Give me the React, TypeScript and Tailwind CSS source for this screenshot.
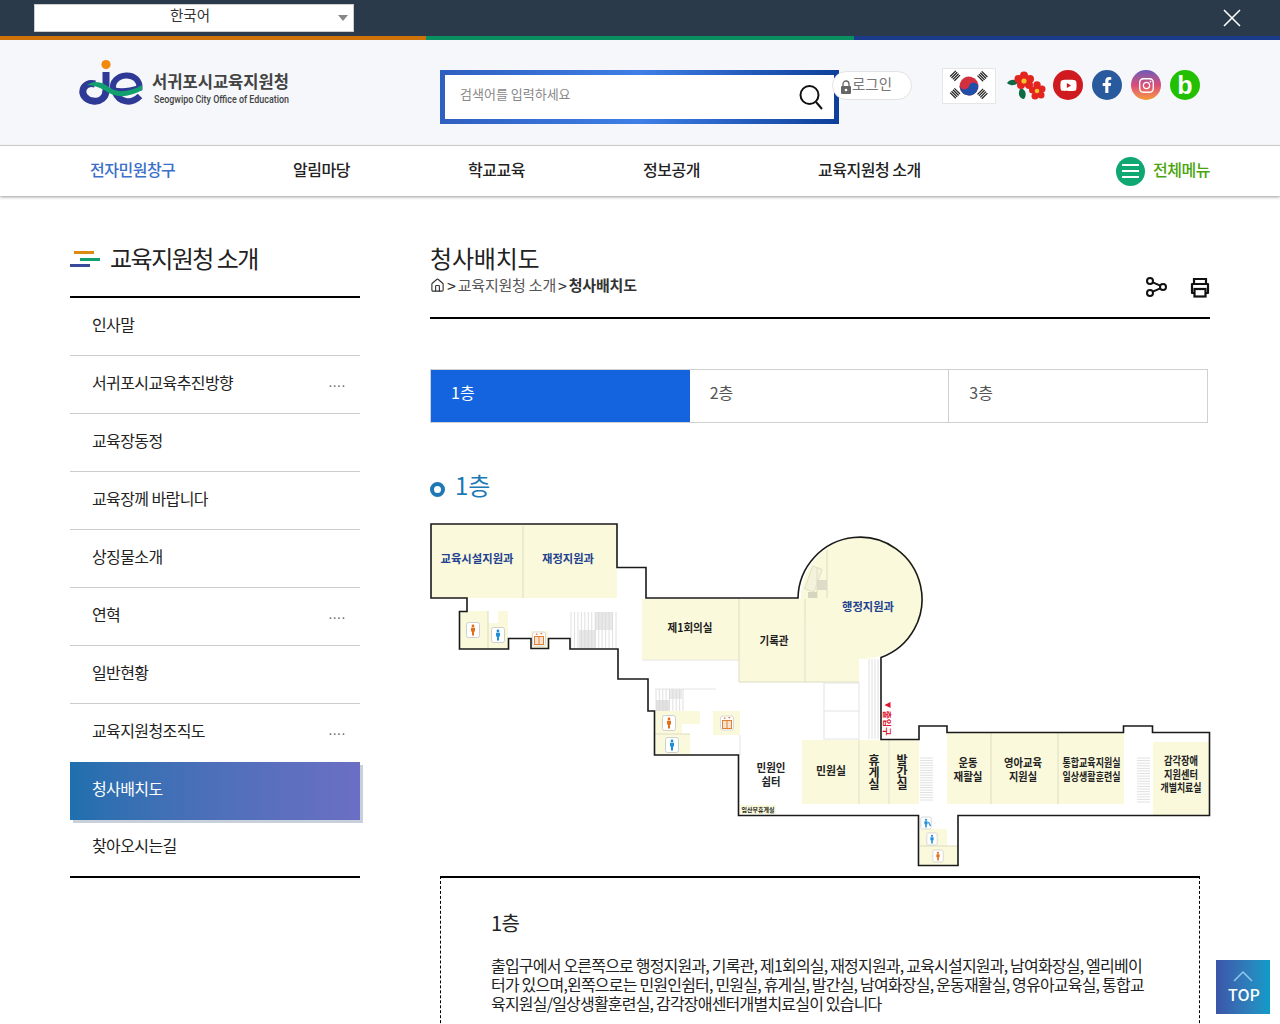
import { Home } from "lucide-react";
import { FaFacebookF, FaInstagram, FaYoutube } from "react-icons/fa";

const navItems = [
  { label: "전자민원창구", className: "w-[203px] pb-[5px] text-[#3b6fc9]" },
  { label: "알림마당", className: "w-[175px] pb-[5px]" },
  { label: "학교교육", className: "w-[175px] pb-[5px]" },
  { label: "정보공개", className: "w-[175px] pb-[5px]" },
  { label: "교육지원청 소개", className: "w-[175px] pb-[5px]" },
];

const sideItems = [
  { label: "인사말" },
  { label: "서귀포시교육추진방향", more: true },
  { label: "교육장동정" },
  { label: "교육장께 바랍니다" },
  { label: "상징물소개" },
  { label: "연혁", more: true },
  { label: "일반현황" },
  { label: "교육지원청조직도", more: true },
  { label: "청사배치도", active: true },
  { label: "찾아오시는길", last: true },
];

const ROOM = "#fbf9dc";
const NAVY = "#21418f";
const INK = "#222222";

// room labels on the floor plan
const Label = ({ x, y, t, size = 11, fill = INK, w }: { x: number; y: number; t: string; size?: number; fill?: string; w?: number }) => (
  <text
    x={x}
    y={y}
    textAnchor="middle"
    dominantBaseline="central"
    fontSize={size}
    fontWeight={700}
    fill={fill}
    textLength={w}
    lengthAdjust={w ? "spacingAndGlyphs" : undefined}
  >
    {t}
  </text>
);

const VLabel = ({ x, y, t }: { x: number; y: number; t: string }) => (
  <text x={x} y={y} writingMode="vertical-rl" textAnchor="middle" fontSize={12} fontWeight={700} fill={INK}>
    {t}
  </text>
);

const Stairs = ({ x, y, w, h, n, vertical = false }: { x: number; y: number; w: number; h: number; n: number; vertical?: boolean }) => (
  <g stroke="#d8d8d8" strokeWidth="0.8">
    {Array.from({ length: n }).map((_, i) =>
      vertical ? (
        <line key={i} x1={x + (i * w) / (n - 1)} y1={y} x2={x + (i * w) / (n - 1)} y2={y + h} />
      ) : (
        <line key={i} x1={x} y1={y + (i * h) / (n - 1)} x2={x + w} y2={y + (i * h) / (n - 1)} />
      ),
    )}
  </g>
);

const Person = ({ x, y, color, s = 1 }: { x: number; y: number; color: string; s?: number }) => (
  <g transform={`translate(${x} ${y}) scale(${s})`}>
    <rect x="-6.5" y="-7.5" width="13" height="15" rx="2" fill="#fff" stroke="#cfcfcf" />
    <circle cx="0" cy="-4" r="1.4" fill={color} />
    <path d="M-2 -2.3H2V1.5H1V5.500H-1V1.500H-2Z" fill={color} />
  </g>
);

const Lift = ({ x, y }: { x: number; y: number }) => (
  <g transform={`translate(${x} ${y})`}>
    <rect x="-6.5" y="-7" width="13" height="14" rx="2" fill="#fff" stroke="#d8d8d8" />
    <rect x="-4.5" y="-2.5" width="9" height="8" fill="#f8e3d0" stroke="#e08033" />
    <line x1="0" y1="-2.5" x2="0" y2="5.5" stroke="#e08033" />
    <path d="M-3.5 -4.2L-2.3 -6L-1 -4.2ZM1 -6L2.3 -4.2L3.5 -6Z" fill="#e08033" />
  </g>
);

const FloorPlan = () => (
  <svg viewBox="430 520 782 350" className="block w-[782px] h-[350px]">
    {/* rooms */}
    <g fill={ROOM}>
      <rect x="431" y="524" width="186" height="74" />
      <rect x="459" y="611" width="29" height="38" />
      <rect x="488" y="623" width="20" height="26" />
      <rect x="498" y="611" width="10" height="12" />
      <rect x="531" y="631" width="17" height="17" />
      <rect x="642" y="599" width="97" height="61" />
      <rect x="739" y="599" width="66" height="83" />
      <circle cx="862" cy="598" r="61" />
      <rect x="806" y="599" width="53" height="83" />
      <rect x="655" y="711" width="45" height="13" />
      <rect x="655" y="724" width="27" height="10" />
      <rect x="655" y="734" width="35" height="20" />
      <rect x="713" y="711" width="27" height="24" />
      <rect x="802" y="740" width="57" height="64" />
      <rect x="860" y="740" width="29" height="64" />
      <rect x="890" y="740" width="29" height="64" />
      <rect x="947" y="732" width="44" height="72" />
      <rect x="991" y="732" width="67" height="72" />
      <rect x="1058" y="732" width="66" height="72" />
      <rect x="1153" y="742" width="56" height="73" />
      <rect x="920" y="829" width="27" height="17" />
      <rect x="920" y="846" width="38" height="19" />
    </g>
    <rect x="859" y="659" width="22" height="24" fill="#fff" />
    {/* inner walls */}
    <g stroke="#dedcc0" strokeWidth="1" fill="none">
      <line x1="523" y1="526" x2="523" y2="598" />
      <line x1="739" y1="599" x2="739" y2="682" />
      <line x1="805" y1="599" x2="805" y2="682" />
      <line x1="739" y1="682" x2="859" y2="682" />
      <line x1="827" y1="550" x2="827" y2="598" />
      <line x1="859" y1="740" x2="859" y2="804" />
      <line x1="889" y1="740" x2="889" y2="804" />
      <line x1="991" y1="733" x2="991" y2="804" />
      <line x1="1058" y1="733" x2="1058" y2="804" />
      <line x1="488" y1="611" x2="488" y2="649" />
      <line x1="920" y1="846" x2="958" y2="846" />
      <line x1="655" y1="734" x2="690" y2="734" />
    </g>
    <g stroke="#e4e4e4" strokeWidth="1" fill="none">
      <rect x="824" y="683" width="35" height="56" />
      <line x1="824" y1="711" x2="859" y2="711" />
      <line x1="655" y1="689" x2="716" y2="689" />
      <line x1="642" y1="660" x2="739" y2="660" />
      <line x1="740" y1="735" x2="740" y2="755" />
    </g>
    {/* stairs */}
    <rect x="579" y="630" width="17" height="18" fill="#e8e8e8" />
    <rect x="595" y="612" width="18" height="18" fill="#e8e8e8" />
    <Stairs x={571} y={612} w={45} h={37} n={14} vertical />
    <rect x="656" y="700" width="13" height="11" fill="#e2e2e2" />
    <rect x="669" y="689" width="13" height="10" fill="#eaeaea" />
    <Stairs x={656} y={689} w={27} h={22} n={9} vertical />
    <Stairs x={869} y={659} w={9} h={80} n={4} vertical />
    <Stairs x={920} y={758} w={13} h={42} n={18} />
    <Stairs x={1137} y={758} w={13} h={44} n={18} />
    <g transform="translate(813 580) rotate(20)" stroke="#dcdbc4" strokeWidth="0.8" fill="#f4f2da">
      <rect x="-5" y="-13" width="10" height="24" />
    </g>
    <line x1="817" y1="568" x2="817" y2="598" stroke="#dedcc0" />
    <rect x="808" y="592" width="9" height="6" fill="#d6d5c0" />
    <rect x="817" y="580" width="10" height="10" fill="#dedcc8" />
    {/* outer wall */}
    <path
      d="M431 524H617V567.5H646V598H798A62 62 0 1 1 881 657.5V739.5H919V726H947V732.5H1123.5V726H1152.5V732.5H1209.5V815.5H958V865.5H918.5V815.5H738.5V755H654.5V711H648V679H618V649H570V638.5H548.5V648.5H531V638.5H508.5V649H459.5V611.5H467V598H431Z"
      fill="none"
      stroke="#1a1a1a"
      strokeWidth="1.6"
    />
    {/* fixtures */}
    <Person x={473} y={630} color="#e0701c" />
    <Person x={498} y={635} color="#1f8fd8" />
    <Lift x={539} y={639} />
    <Person x={669} y={723} color="#e0701c" />
    <Person x={672} y={745} color="#1f8fd8" />
    <Lift x={727} y={723} />
    <Person x={926} y={823} color="#1f8fd8" s={0.8} />
    <path d="M928.500 822L930.500 826" stroke="#1f8fd8" strokeWidth="1.2" />
    <Person x={932} y={839} color="#1f8fd8" s={0.8} />
    <Person x={938} y={856} color="#e0701c" s={0.8} />
    <rect x="740" y="805" width="36" height="9" fill={ROOM} />
    <Label x={758} y={809.5} t="임산부휴게실" size={6} w={33} />
    {/* labels */}
    <Label x={477} y={557.5} t="교육시설지원과" fill={NAVY} w={73} />
    <Label x={568} y={557.5} t="재정지원과" fill={NAVY} w={52} />
    <Label x={690} y={626.5} t="제1회의실" w={45} />
    <Label x={774} y={640} t="기록관" w={29} />
    <Label x={868} y={606} t="행정지원과" fill={NAVY} w={52} />
    <Label x={771} y={767} t="민원인" w={29} />
    <Label x={771} y={781} t="쉼터" w={19} />
    <Label x={831} y={769.5} t="민원실" w={30} />
    <VLabel x={874} y={772} t="휴게실" />
    <VLabel x={902} y={772} t="발간실" />
    <Label x={968} y={762} t="운동" w={19} />
    <Label x={968} y={776} t="재활실" w={29} />
    <Label x={1023} y={762} t="영아교육" w={38} />
    <Label x={1023} y={776} t="지원실" w={28} />
    <Label x={1091.5} y={762} t="통합교육지원실" w={58} />
    <Label x={1091.5} y={776} t="일상생활훈련실" w={58} />
    <Label x={1181} y={760} t="감각장애" w={34} />
    <Label x={1181} y={773.5} t="지원센터" w={34} />
    <Label x={1181} y={787} t="개별치료실" w={41} />
    <path d="M884.500 705L890.500 702V708Z" fill="#e0102c" />
    <g transform="translate(888 723) rotate(90)">
      <Label x={0} y={0} t="출입구" size={8.5} fill="#e0102c" w={25} />
    </g>
  </svg>
);

const Logo = () => (
  <svg viewBox="78 56 216 52" className="w-[216px] h-[52px] overflow-visible">
    <circle cx="106" cy="64.500" r="4.600" fill="#ef8a0c" />
    <path d="M106 72V90C106 98 100 102 93 101C85 100 82 94 83 90C84 85 89 82.5 95 84" fill="none" stroke="#2f3a96" strokeWidth="7" />
    <path d="M113.5 90C111 82 118 76 126 75.5C134.5 75 140 81 139.5 88C130 91 120 92 113.5 90Z" fill="none" stroke="#2f3a96" strokeWidth="6" />
    <path d="M115 92C119 102 131 105 140 96" fill="none" stroke="#2f3a96" strokeWidth="6.500" />
    <path d="M87 85C95 79 104 83 110 88C118 93 130 92 142 85V90C130 97 118 98 109 93C103 89 95 85 87 85Z" fill="#12a06e" />
    <text x="152" y="88" fontSize="17" fontWeight="700" fill="#444" textLength="137" lengthAdjust="spacingAndGlyphs">서귀포시교육지원청</text>
    <text x="154" y="103" fontSize="11" fontWeight="500" fill="#444" textLength="135" lengthAdjust="spacingAndGlyphs" fontFamily="Roboto, sans-serif">Seogwipo City Office of Education</text>
  </svg>
);

const Flag = () => (
  <div className="w-[54px] h-[36px] bg-white border border-[#e6e6e6] flex items-center justify-center">
    <svg viewBox="0 0 54 36" className="w-[52px] h-[34px]">
      <g transform="rotate(15 27 18)">
        <circle cx="27" cy="18" r="10" fill="#d3303f" />
        <path d="M17 18A5 5 0 0 0 27 18A5 5 0 0 1 37 18A10 10 0 0 1 17 18Z" fill="#1f4fa8" />
      </g>
      <g stroke="#222" strokeWidth="1.3">
        <path d="M7 8L13 2M8.500 9.500L14.500 3.500M10 11L16 5M11.500 12.500L17.500 6.500" />
        <path d="M36 6L42 12M37.500 4.500L43.500 10.500M39 3L45 9M40.500 1.500L46.500 7.500" transform="translate(0 1)" />
        <path d="M7 25L13 31M8.500 23.500L14.500 29.500M10 22L16 28M11.500 20.500L17.500 26.500" />
        <path d="M36 27L42 21M37.500 28.500L43.500 22.500M39 30L45 24M40.500 31.500L46.500 25.500" />
      </g>
    </svg>
  </div>
);

const Camellia = () => (
  <svg viewBox="0 0 40 30" className="w-[40px] h-[30px]">
    <path d="M1 12C4 8 9 8 13 11C9 15 4 15 1 12Z" fill="#0f6b45" />
    <path d="M15 17C20 19 21 24 18 28C13 28 11 21 15 17Z" fill="#0f6b45" />
    <g fill="#e4241f">
      <circle cx="18" cy="4.500" r="4" />
      <circle cx="24" cy="8" r="4" />
      <circle cx="23" cy="14" r="4" />
      <circle cx="15" cy="14" r="4" />
      <circle cx="12.500" cy="8" r="4" />
      <circle cx="18" cy="10" r="5" />
      <circle cx="31" cy="14" r="3.700" />
      <circle cx="36" cy="18" r="3.500" />
      <circle cx="35" cy="24" r="3.500" />
      <circle cx="29" cy="25" r="3.500" />
      <circle cx="26.500" cy="19" r="3.500" />
      <circle cx="31" cy="20" r="4.500" />
    </g>
    <circle cx="18" cy="10" r="2.600" fill="#f2c22c" />
    <circle cx="31" cy="20" r="2.300" fill="#f2c22c" />
  </svg>
);

export default function App() {
  return (
    <div className="relative h-[1024px] overflow-hidden bg-white text-[#222] font-['Noto_Sans_CJK_KR',sans-serif]">
      {/* language bar */}
      <div className="h-[36px] bg-[#2b3a4a] flex items-start justify-between pl-[34px] pr-[38px]">
        <div className="relative mt-[4px] w-[320px] h-[28px] pr-[8px] bg-white border border-[#ccc] text-center text-[14.500px] leading-[20px] text-[#333]">
          한국어
          <span className="absolute right-[5px] top-[10px] border-x-[5px] border-t-[6px] border-x-transparent border-t-[#888]" />
        </div>
        <svg viewBox="0 0 20 20" className="mt-[8px] w-[20px] h-[20px]" fill="none" stroke="#fff" strokeWidth="1.6">
          <path d="M2 2L18 18M18 2L2 18" />
        </svg>
      </div>
      <div className="flex h-[4px]">
        <div className="w-[426px] bg-[#d0720a]" />
        <div className="w-[428px] bg-[#0a9060]" />
        <div className="flex-1 bg-[#1c3a8a]" />
      </div>

      {/* header */}
      <div className="h-[106px] bg-[#f5f7fa] border-b border-[#d8d8d8] flex items-start">
        <div className="ml-[78px] mt-[16px] w-[362px]">
          <Logo />
        </div>
        <div className="mt-[30px] w-[399px] h-[54px] p-[5px] bg-gradient-to-r from-[#2f5fc0] via-[#3f7fe6] to-[#0d3f9a]">
          <div className="h-full bg-white flex items-center justify-between pl-[15px] pr-[10px] text-[13px] text-[#888]">
            <span className="pb-[7px]">검색어를 입력하세요</span>
            <svg viewBox="0 0 26 26" className="w-[26px] h-[26px] mb-[1px]" fill="none" stroke="#111" strokeWidth="2">
              <circle cx="11.500" cy="11" r="9" />
              <path d="M18 18L24 25" />
            </svg>
          </div>
        </div>
        <div className="relative -ml-[7px] mt-[31px] w-[80px] h-[29px] rounded-full bg-white border border-[#e2e2e2] flex items-center pl-[7px] text-[14.500px] text-[#777]">
          <svg viewBox="0 0 12 14" className="w-[12px] h-[14px] mt-[3px]">
            <path d="M3 7V4a3 3 0 0 1 6 0V7" fill="none" stroke="#666" strokeWidth="1.300" />
            <rect x="1" y="6" width="10" height="8" rx="1" fill="#666" />
            <circle cx="6" cy="10" r="1.300" fill="#fff" />
          </svg>
          <span className="pb-[4px]">로그인</span>
        </div>
        <div className="ml-[30px] mt-[28px]">
          <Flag />
        </div>
        <div className="ml-[10px] mt-[31px]">
          <Camellia />
        </div>
        <div className="ml-[7px] mt-[30px] flex gap-[9px]">
          <div className="w-[30px] h-[30px] rounded-full bg-[#cf1a1f] flex items-center justify-center text-white text-[17px]">
            <FaYoutube />
          </div>
          <div className="w-[30px] h-[30px] rounded-full bg-[#2a5a9e] flex items-center justify-center text-white text-[16px]">
            <FaFacebookF />
          </div>
          <div className="w-[30px] h-[30px] rounded-full bg-gradient-to-t from-[#f59a2e] via-[#d94a78] to-[#6a56b8] flex items-center justify-center text-white text-[17px]">
            <FaInstagram />
          </div>
          <div className="w-[30px] h-[30px] rounded-full bg-[#22c000] flex items-center justify-center text-white text-[25px] leading-none font-bold font-['Liberation_Sans',sans-serif]">
            b
          </div>
        </div>
      </div>

      {/* main nav */}
      <div className="relative h-[50px] bg-white shadow-[0_1px_3px_rgba(0,0,0,0.4)] flex items-center pl-[90px] pr-[70px] text-[16px] font-medium tracking-[-0.5px]">
        {navItems.map((item) => (
          <div key={item.label} className={item.className}>
            {item.label}
          </div>
        ))}
        <div className="ml-auto flex items-center gap-[8px] text-[#4aa50f]">
          <div className="w-[29px] h-[29px] rounded-full bg-[#0fa873] flex flex-col items-center justify-center gap-[4px]">
            <span className="w-[17px] h-[2px] bg-white" />
            <span className="w-[17px] h-[2px] bg-white" />
            <span className="w-[17px] h-[2px] bg-white" />
          </div>
          <span className="pb-[5px]">전체메뉴</span>
        </div>
      </div>

      <div className="flex pl-[70px]">
        {/* side menu */}
        <div className="w-[290px]">
          <div className="mt-[45px] mb-[19px] h-[36px] flex items-center gap-[10px]">
            <div className="w-[30px] flex flex-col gap-[3.500px]">
              <span className="ml-[4px] w-[20px] h-[3px] bg-[#dd8a12]" />
              <span className="ml-[10px] w-[20px] h-[3px] bg-[#12a06e]" />
              <span className="w-[20px] h-[3px] bg-[#3a4a9e]" />
            </div>
            <span className="pb-[2px] text-[24px] tracking-[-1.500px]">교육지원청 소개</span>
          </div>
          <ul className="border-y-2 border-black text-[16px] tracking-[-0.6px]">
            {sideItems.map((item, i) => (
              <li
                key={item.label}
                className={
                  item.active
                    ? "h-[58px] flex items-center pl-[22px] pb-[6px] text-white bg-gradient-to-r from-[#1f6fae] to-[#6b6fc4] shadow-[3px_3px_0_#c8d0dc]"
                    : item.last
                      ? "h-[56px] flex items-center pl-[22px] pb-[6px]"
                      : `h-[58px] flex items-center justify-between pl-[22px] pr-[14px] pb-[6px] ${i < sideItems.length - 2 && !sideItems[i + 1].active ? "border-b border-[#ccc]" : ""}`
                }
              >
                {item.label}
                {item.more && <span className="text-[12px] tracking-[1px] text-[#666]">....</span>}
              </li>
            ))}
          </ul>
        </div>

        {/* content */}
        <div className="ml-[70px] w-[780px]">
          <div className="mt-[46px] pb-[22px] border-b-2 border-black flex items-end justify-between">
            <div>
              <h1 className="text-[24px] leading-[32px] tracking-[-0.2px]">청사배치도</h1>
              <div className="mt-[1px] h-[20px] flex items-center gap-[2px] text-[15px] tracking-[-0.2px] text-[#555]">
                <Home className="w-[15px] h-[15px] text-[#333]" strokeWidth={1.800} />
                <span className="text-[16px] text-[#333]">&gt;</span>
                <span>교육지원청 소개</span>
                <span className="text-[16px] text-[#333]">&gt;</span>
                <b className="text-[#333]">청사배치도</b>
              </div>
            </div>
            <div className="-mb-[3px] flex items-center gap-[23px]">
              <svg viewBox="0 0 22 22" className="w-[22px] h-[22px]" fill="none" stroke="#111" strokeWidth="2">
                <circle cx="5" cy="5" r="3" />
                <circle cx="5" cy="17" r="3" />
                <circle cx="18" cy="11" r="3" />
                <path d="M7.800 6.300L15.300 9.700M7.800 15.700L15.300 12.300" />
              </svg>
              <svg viewBox="0 0 20 21" className="w-[20px] h-[21px]" fill="none" stroke="#111" strokeWidth="2.200">
                <path d="M4 7V2H16V7" />
                <path d="M4 16H2V7H18V16H16" strokeLinejoin="round" />
                <rect x="4.500" y="12" width="11" height="7.500" />
              </svg>
            </div>
          </div>

          <div className="mt-[50px] w-[778px] h-[54px] grid grid-cols-3 border border-[#d0d0d0] text-[16px]">
            <div className="bg-[#1464e0] text-white flex items-center pl-[20px] pb-[8px]">1층</div>
            <div className="text-[#555] flex items-center pl-[20px] pb-[8px]">2층</div>
            <div className="text-[#555] flex items-center pl-[20px] pb-[8px] border-l border-[#d0d0d0]">3층</div>
          </div>

          <div className="mt-[45px] h-[36px] flex items-center gap-[10px]">
            <span className="mt-[6px] w-[15px] h-[15px] rounded-full border-[4px] border-[#1d78b4] bg-white" />
            <span className="pb-[2px] text-[24px] text-[#1d78b4]">1층</span>
          </div>

          <div className="mt-[16px]">
            <FloorPlan />
          </div>

          <div className="mt-[6px] ml-[10px] w-[760px] border-x border-dashed border-x-black border-t-2 border-t-black [border-top-style:solid] px-[50px] pt-[30px] pb-[40px]">
            <div className="text-[20px] leading-[30px] tracking-[-0.5px]">1층</div>
            <p className="mt-[18px] w-[660px] text-[16px] leading-[19px] tracking-[-0.8px] break-all">
              출입구에서 오른쪽으로 행정지원과, 기록관, 제1회의실, 재정지원과, 교육시설지원과, 남여화장실, 엘리베이터가 있으며,왼쪽으로는 민원인쉼터, 민원실, 휴게실, 발간실, 남여화장실, 운동재활실, 영유아교육실, 통합교육지원실/일상생활훈련실, 감각장애센터개별치료실이 있습니다
            </p>
          </div>
        </div>
      </div>

      {/* back to top */}
      <div className="absolute left-[1216px] top-[960px] w-[54px] h-[54px] bg-gradient-to-r from-[#3a55a8] to-[#0d9bc8] flex flex-col items-center text-white">
        <svg viewBox="0 0 20 12" className="mt-[10px] w-[20px] h-[12px]" fill="none" stroke="#8fc8ee" strokeWidth="1.500">
          <path d="M1 11L10 2L19 11" />
        </svg>
        <span className="mt-[3px] ml-[2px] text-[16px] leading-[18px] font-medium">TOP</span>
      </div>
    </div>
  );
}
